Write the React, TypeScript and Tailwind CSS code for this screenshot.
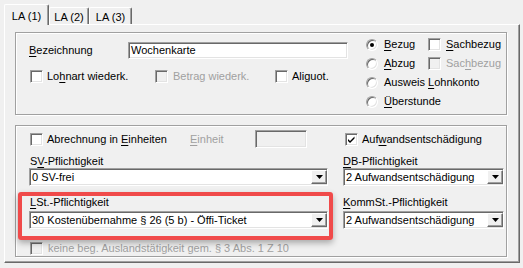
import type { ReactNode } from "react";

const sunken =
  "border border-l-[#a0a0a0] border-t-[#a0a0a0] border-r-white border-b-white shadow-[inset_1px_1px_0_#696969,inset_-1px_-1px_0_#e3e3e3]";

function U({ children }: { children: ReactNode }) {
  return <span className="underline underline-offset-[2px]">{children}</span>;
}

function Check({ checked = false, disabled = false }: { checked?: boolean; disabled?: boolean }) {
  return (
    <span
      className={[
        "relative inline-block w-[13px] h-[13px] shrink-0",
        sunken,
        disabled ? "bg-[#f0f0f0]" : "bg-white",
      ].join(" ")}
    >
      {checked && (
        <svg className="absolute left-[1px] top-[1px]" width="9" height="9" viewBox="0 0 9 9">
          <path d="M1 4 L3 6 L7.5 1.5 L7.5 3.5 L3 8 L1 6 Z" fill="#000" />
        </svg>
      )}
    </span>
  );
}

function Radio({ checked = false }: { checked?: boolean }) {
  return (
    <span className="relative inline-block w-[12px] h-[12px] shrink-0 rounded-full bg-white border border-l-[#a0a0a0] border-t-[#a0a0a0] border-r-white border-b-white shadow-[inset_1px_1px_0_#696969,inset_-1px_-1px_0_#e3e3e3]">
      {checked && (
        <span className="absolute left-[3px] top-[3px] w-[4px] h-[4px] rounded-full bg-black" />
      )}
    </span>
  );
}

function Combo({ value, width }: { value: string; width: string }) {
  return (
    <div className={["flex items-center h-[18px] bg-white pl-[2px]", sunken, width].join(" ")}>
      <span className="flex-1 whitespace-nowrap">{value}</span>
      <span className="flex items-center justify-center w-[16px] h-[14px] bg-[#f0f0f0] border border-l-white border-t-white border-r-[#696969] border-b-[#696969] shadow-[inset_-1px_-1px_0_#a0a0a0]">
        <svg width="7" height="4" viewBox="0 0 7 4">
          <path d="M0 0 H7 L3.5 4 Z" fill="#000" />
        </svg>
      </span>
    </div>
  );
}

export default function App() {
  return (
    <div className="relative w-[523px] h-[268px] overflow-hidden bg-[#f0f0f0] text-[11px] leading-[13px] text-black font-['Liberation_Sans',Arial,sans-serif]">
      {/* tabs */}
      <div className="relative z-10 flex items-end h-[24px] pl-[4px]">
        <div className="w-[45px] h-[21px] mb-[-1px] pt-[5px] text-center bg-[#f0f0f0] rounded-t-[2px] border-l border-t border-r border-l-white border-t-white border-r-[#696969] shadow-[inset_-1px_0_0_#a0a0a0]">
          LA (1)
        </div>
        <div className="w-[40px] h-[17px] pt-[3px] text-center rounded-t-[2px] border-l border-t border-r border-l-white border-t-white border-r-[#696969] shadow-[inset_-1px_0_0_#a0a0a0]">
          LA (2)
        </div>
        <div className="w-[43px] h-[17px] pt-[3px] text-center rounded-t-[2px] border-l border-t border-r border-l-white border-t-white border-r-[#696969] shadow-[inset_-1px_0_0_#a0a0a0]">
          LA (3)
        </div>
      </div>

      {/* tab page */}
      <div className="ml-[4px] w-[516px] h-[239px] border border-l-white border-t-white border-r-[#696969] border-b-[#696969] shadow-[inset_-1px_-1px_0_#a0a0a0]">
        {/* group 1 */}
        <div className="ml-[10px] mt-[7px] w-[492px] h-[83px] flex border border-[#a0a0a0] shadow-[inset_1px_1px_0_#fff,1px_1px_0_#fff]">
          <div className="w-[350px] pl-[13px] pt-[9px] flex flex-col">
            <div className="flex items-center h-[17px]">
              <span className="w-[99px]">
                <U>B</U>ezeichnung
              </span>
              <div className={["w-[220px] h-[17px] bg-white pl-[2px] flex items-center", sunken].join(" ")}>
                Wochenkarte
              </div>
            </div>
            <div className="flex items-center h-[13px] mt-[11px] pl-[1px]">
              <div className="flex items-center gap-[4px] w-[125px]">
                <Check />
                <span>
                  Lo<U>h</U>nart wiederk.
                </span>
              </div>
              <div className="flex items-center gap-[5px] w-[120px] text-[#a0a0a0]">
                <Check disabled />
                <span>Betrag wiederk.</span>
              </div>
              <div className="flex items-center gap-[4px]">
                <Check />
                <span>Aliguot.</span>
              </div>
            </div>
          </div>

          <div className="flex flex-col pt-[2px]">
            <div className="flex items-center h-[19px]">
              <div className="flex items-center gap-[6px] w-[62px]">
                <Radio checked />
                <span>
                  <U>B</U>ezug
                </span>
              </div>
              <div className="flex items-center gap-[5px]">
                <Check />
                <span>
                  <U>S</U>achbezug
                </span>
              </div>
            </div>
            <div className="flex items-center h-[19px]">
              <div className="flex items-center gap-[6px] w-[62px]">
                <Radio />
                <span>
                  <U>A</U>bzug
                </span>
              </div>
              <div className="flex items-center gap-[5px] text-[#a0a0a0]">
                <Check disabled />
                <span>
                  Sac<U>h</U>bezug
                </span>
              </div>
            </div>
            <div className="flex items-center h-[19px] gap-[6px]">
              <Radio />
              <span>
                Ausweis <U>L</U>ohnkonto
              </span>
            </div>
            <div className="flex items-center h-[19px] gap-[6px]">
              <Radio />
              <span>
                <U>Ü</U>berstunde
              </span>
            </div>
          </div>
        </div>

        {/* group 2 */}
        <div className="ml-[10px] mt-[10px] w-[492px] h-[132px] pt-[4px] border border-[#a0a0a0] shadow-[inset_1px_1px_0_#fff,1px_1px_0_#fff]">
          <div className="flex items-center h-[18px] pl-[14px]">
            <div className="flex items-center gap-[4px] w-[160px]">
              <Check />
              <span>
                Abrechnung in <U>E</U>inheiten
              </span>
            </div>
            <span className="w-[65px] text-[#a0a0a0]">
              <U>E</U>inheit
            </span>
            <div className={["w-[52px] h-[18px] bg-[#f0f0f0]", sunken].join(" ")} />
            <div className="flex items-center gap-[4px] ml-[38px]">
              <Check checked />
              <span>
                Auf<U>w</U>andsentschädigung
              </span>
            </div>
          </div>

          <div className="flex pl-[13px] mt-[7px]">
            <div className="flex flex-col w-[299px]">
              <span className="pl-[1px]">
                S<U>V</U>-Pflichtigkeit
              </span>
              <Combo value="0 SV-frei" width="w-[299px]" />
              <span className="pl-[1px] mt-[10px]">
                <U>L</U>St.-Pflichtigkeit
              </span>
              <div className="mt-[2px]">
                <Combo value="30 Kostenübernahme § 26 (5 b) - Öffi-Ticket" width="w-[299px]" />
              </div>
              <div className="flex items-center gap-[5px] mt-[13px] pl-[1px] text-[#a0a0a0]">
                <Check disabled />
                <span>keine beg. Auslandstätigkeit gem. § 3 Abs. 1 Z 10</span>
              </div>
            </div>
            <div className="flex flex-col w-[161px] ml-[15px]">
              <span>
                <U>D</U>B-Pflichtigkeit
              </span>
              <Combo value="2 Aufwandsentschädigung" width="w-[161px]" />
              <span className="mt-[10px]">
                <U>K</U>ommSt.-Pflichtigkeit
              </span>
              <div className="mt-[2px]">
                <Combo value="2 Aufwandsentschädigung" width="w-[161px]" />
              </div>
            </div>
          </div>
        </div>
      </div>

      {/* highlight annotation */}
      <div className="absolute left-[18px] top-[192px] w-[315px] h-[48px] border-[4px] border-[#f04a4a] rounded-[3px] shadow-[0_3px_6px_rgba(0,0,0,0.3)]" />
    </div>
  );
}
